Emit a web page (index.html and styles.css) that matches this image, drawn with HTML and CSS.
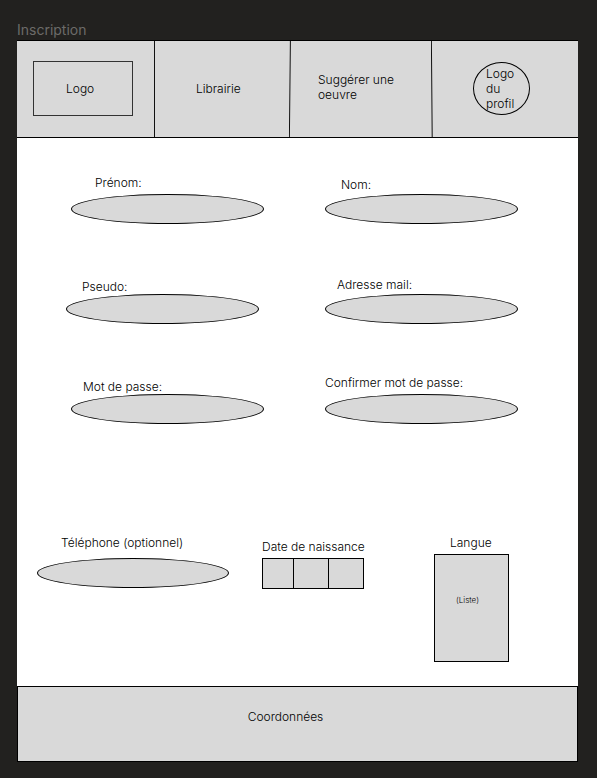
FILE: index.html
```html
<!DOCTYPE html>
<html lang="fr">
<head>
<meta charset="utf-8">
<meta name="viewport" content="width=device-width, initial-scale=1">
<title>Inscription</title>
<link rel="stylesheet" href="styles.css">
</head>
<body>
<h1 class="title">Inscription</h1>
<div class="page">
  <header class="topbar">
    <a class="cell cell-logo" href="#"><span class="logo">Logo</span></a>
    <svg class="divider" viewBox="0 0 2 96" preserveAspectRatio="none" aria-hidden="true"><path d="M.5 0V96"/></svg>
    <a class="cell cell-library" href="#">Librairie</a>
    <svg class="divider" viewBox="0 0 2 96" preserveAspectRatio="none" aria-hidden="true"><path d="M1.4 0L.4 96"/></svg>
    <a class="cell cell-suggest" href="#">Suggérer une oeuvre</a>
    <svg class="divider" viewBox="0 0 2 96" preserveAspectRatio="none" aria-hidden="true"><path d="M.4 0L1.2 96"/></svg>
    <a class="cell cell-profile" href="#"><span class="avatar">Logo du profil</span></a>
  </header>
  <main>
    <form class="form">
      <div class="account">
        <div class="field left gap-m"><label class="indent-l" for="prenom">Prénom:</label><input class="oval" id="prenom" type="text"></div>
        <div class="field right gap-s"><label class="indent-m" for="nom">Nom:</label><input class="oval" id="nom" type="text"></div>
        <div class="field left shifted"><label class="indent-m" for="pseudo">Pseudo:</label><input class="oval" id="pseudo" type="text"></div>
        <div class="field right gap-s"><label class="indent-s" for="mail">Adresse mail:</label><input class="oval" id="mail" type="email"></div>
        <div class="field left"><label class="indent-s" for="mdp">Mot de passe:</label><input class="oval" id="mdp" type="password"></div>
        <div class="field right gap-m"><label for="mdp2">Confirmer mot de passe:</label><input class="oval" id="mdp2" type="password"></div>
      </div>
      <div class="details">
        <div class="field phone gap-l"><label class="indent-l" for="tel">Téléphone (optionnel)</label><input class="oval" id="tel" type="tel"></div>
        <div class="field birth gap-m" role="group" aria-labelledby="naissance">
          <span class="group-label" id="naissance">Date de naissance</span>
          <div class="date">
            <input type="text" inputmode="numeric" aria-label="Jour">
            <input type="text" inputmode="numeric" aria-label="Mois">
            <input type="text" inputmode="numeric" aria-label="Année">
          </div>
        </div>
        <div class="field language gap-m"><label class="indent-m" for="langue">Langue</label><select class="list" id="langue"><option>(Liste)</option></select></div>
      </div>
    </form>
  </main>
  <footer class="footer">Coordonnées</footer>
</div>
</body>
</html>
```
FILE: styles.css
```css
:root {
  --ink: #000;
  --fill: #d9d9d9;
  --canvas: #22211f;
}

* { box-sizing: border-box; }

body {
  margin: 0;
  padding: 20px 19px 16px 17px;
  min-height: 100vh;
  background: var(--canvas);
  color: var(--ink);
  font: 300 12px/15px Inter, "Liberation Sans", sans-serif;
}

.title {
  margin: 0;
  font-size: 14px;
  font-weight: 400;
  line-height: 20px;
  color: #6c6b69;
}

.page { background: #fff; }

.topbar {
  display: grid;
  grid-template-columns: 137fr 2px 133fr 2px 140fr 2px 145fr;
  min-height: 98px;
  background: var(--fill);
  border-top: 1px solid #000;
  border-bottom: 1px solid #000;
}

.divider { width: 2px; height: 100%; }
.divider path { fill: none; stroke: #111; stroke-width: 1; }

.cell {
  display: flex;
  align-items: center;
  padding-bottom: 2px;
  color: inherit;
  text-decoration: none;
}
.cell-logo { padding-left: 16px; padding-right: 21px; }
.cell-library { padding-left: 40px; padding-right: 16px; }
.cell-suggest { padding: 0 36px 4px 27px; }
.cell-profile { padding-left: 40px; }

.logo {
  flex: 1;
  display: flex;
  align-items: center;
  height: 55px;
  padding-left: 32px;
  border: 1px solid #333;
}

.avatar {
  display: flex;
  align-items: center;
  width: 57px;
  height: 53px;
  padding: 0 12px;
  border: 1px solid var(--ink);
  border-radius: 50%;
}

.form { padding: 34px 0 24px; }

.account {
  display: grid;
  grid-template-columns: 54fr 193fr 61fr 193fr 60fr;
  grid-auto-rows: 52px;
  row-gap: 48px;
}

.details {
  display: grid;
  grid-template-columns: 20fr 192fr 33fr 102fr 70fr 75fr 69fr;
  align-items: start;
  margin-top: 111px;
}

.field {
  display: flex;
  flex-direction: column;
  justify-content: flex-end;
  min-width: 0;
  white-space: nowrap;
}
.left { grid-column: 2; }
.right { grid-column: 4; }
.shifted { margin: 0 5px 0 -5px; }
.phone { grid-column: 2; }
.birth { grid-column: 4; padding-top: 4px; }
.language { grid-column: 6; }

.gap-s { gap: 2px; }
.gap-m { gap: 4px; }
.gap-l { gap: 8px; }

.indent-s { padding-left: 12px; }
.indent-m { padding-left: 16px; }
.indent-l { padding-left: 24px; }

input, select {
  margin: 0;
  min-width: 0;
  border: 1px solid var(--ink);
  border-radius: 0;
  background: var(--fill);
  color: inherit;
  font: inherit;
}

.oval {
  width: 100%;
  height: 30px;
  padding: 0 24px;
  border-radius: 50%;
}

.date {
  display: grid;
  grid-template-columns: 32fr 35fr 35fr;
  height: 31px;
}
.date input { padding: 0 4px; text-align: center; }
.date input + input { border-left: 0; }

.list {
  appearance: none;
  width: 100%;
  height: 108px;
  padding: 0 0 16px 21px;
  font-size: 8px;
}

.footer {
  min-height: 76px;
  padding: 22px 24px 0 0;
  border: 1px solid #000;
  background: var(--fill);
  text-align: center;
}
```
